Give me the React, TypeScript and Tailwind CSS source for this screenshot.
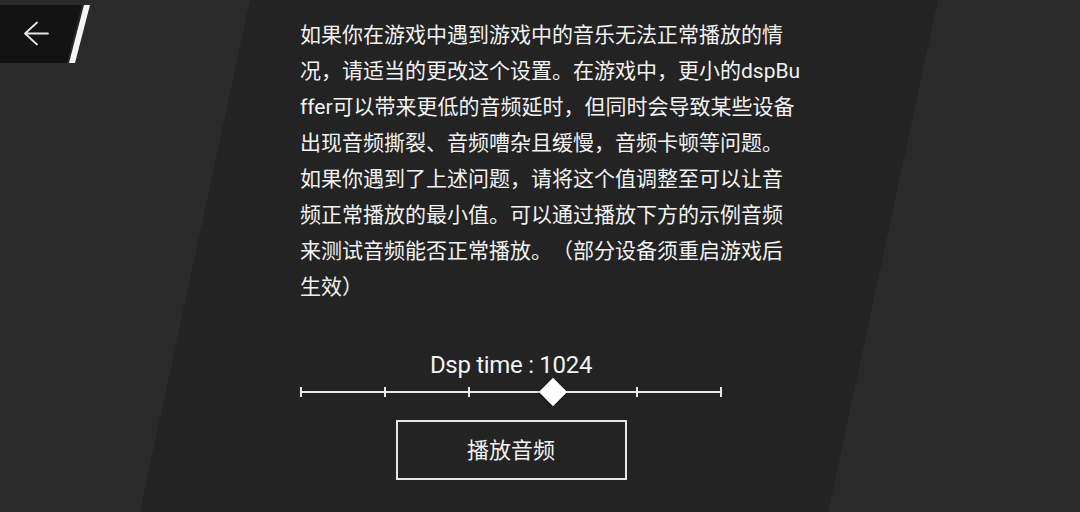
import React from "react";

const cjk = { fontFamily: '"Roboto", "Noto Sans CJK SC", sans-serif' };

export default function App() {
  const ticks = [0, 1, 2, 3, 4, 5];
  return (
    <div
      className="relative w-[1080px] h-[512px] overflow-hidden bg-[#2a2a2a] text-[#f2f2f2]"
      style={cjk}
    >
      {/* background slanted panel */}
      <div className="absolute inset-0 bg-[#232323] [clip-path:polygon(250px_0,938px_0,828px_512px,140px_512px)]" />

      {/* back button */}
      <div className="absolute left-0 top-[5px] h-[58px] w-[92px]">
        <div className="absolute inset-0 bg-[#131313] [clip-path:polygon(0_0,82px_0,67px_58px,0_58px)]" />
        <div className="absolute inset-0 bg-[#f4f4f4] [clip-path:polygon(84px_0,90px_0,75px_58px,69px_58px)]" />
        <svg
          className="absolute left-[22px] top-[16px]"
          width="30"
          height="26"
          viewBox="0 0 30 26"
          fill="none"
          stroke="#e6e6e6"
          strokeWidth="1.8"
          strokeLinecap="round"
          strokeLinejoin="round"
        >
          <path d="M3 12.5 H26 M15 1.5 L3 12.5 L15 23.5" />
        </svg>
      </div>

      {/* content */}
      <div className="relative flex flex-col pl-[300px] pt-[17px]">
        <p className="w-[502px] text-[21px] leading-[36px] break-all [text-spacing-trim:space-all]">
          如果你在游戏中遇到游戏中的音乐无法正常播放的情况，请适当的更改这个设置。在游戏中，更小的dspBuffer可以带来更低的音频延时，但同时会导致某些设备出现音频撕裂、音频嘈杂且缓慢，音频卡顿等问题。如果你遇到了上述问题，请将这个值调整至可以让音频正常播放的最小值。可以通过播放下方的示例音频来测试音频能否正常播放。（部分设备须重启游戏后生效）
        </p>

        <div className="flex w-[422px] flex-col items-center">
          <div className="mt-[45px] text-[24px] leading-[30px] tracking-[-0.3px]" style={{ fontFamily: '"Roboto", sans-serif' }}>
            Dsp time : 1024
          </div>
          <div className="relative mt-[-3px] h-[30px] w-[422px]">
            <div className="absolute left-0 right-0 top-[14px] h-[2px] bg-[#e8e8e8]" />
            <div className="absolute inset-x-0 top-[10px] flex justify-between">
              {ticks.map((t) => (
                <div key={t} className="h-[10px] w-[2px] bg-[#e8e8e8]" />
              ))}
            </div>
            <div className="absolute left-[243px] top-[5px] h-[20px] w-[20px] rotate-45 bg-white shadow-[0_1px_3px_rgba(0,0,0,0.6)]" />
          </div>
          <button className="mt-[13px] flex h-[60px] w-[231px] items-center justify-center border-2 border-[#e6e6e6] text-[22px] text-[#f2f2f2]">
            播放音频
          </button>
        </div>
      </div>
    </div>
  );
}
